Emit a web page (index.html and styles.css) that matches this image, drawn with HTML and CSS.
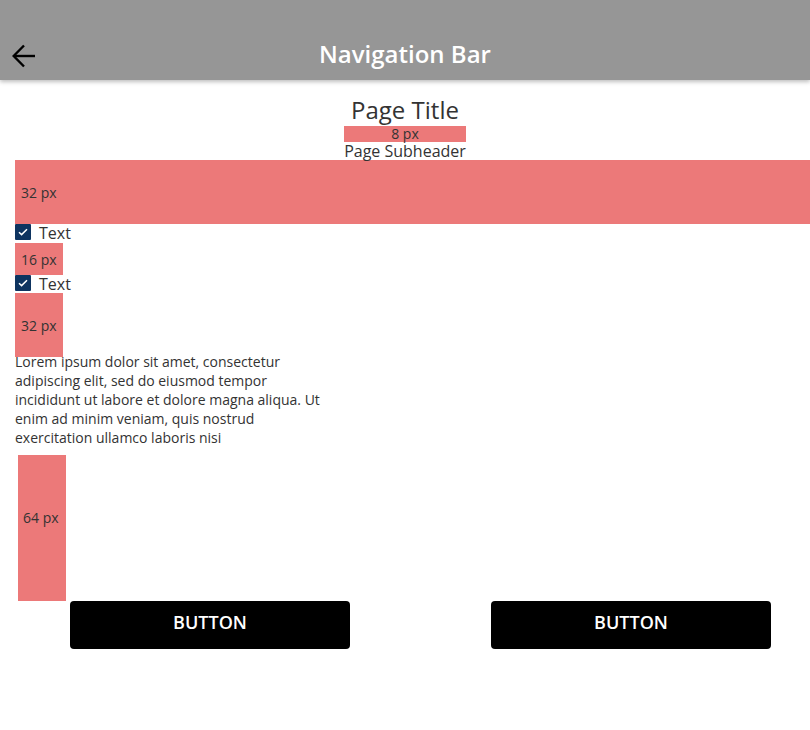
FILE: index.html
```html
<!DOCTYPE html>
<html lang="en">
<head>
<meta charset="utf-8">
<title>Navigation Bar</title>
<link rel="stylesheet" href="styles.css">
</head>
<body>
<header class="navbar">
  <button class="back" aria-label="Back">
    <svg width="26" height="26" viewBox="0 0 26 26" fill="none" stroke="#000" stroke-width="2.4" stroke-linejoin="miter">
      <path d="M3 13H24"/>
      <path d="M13 2.5L2.7 13L13 23.5"/>
    </svg>
  </button>
  <h1 class="nav-title">Navigation Bar</h1>
  <span class="nav-end"></span>
</header>
<main class="content">
  <section class="title-block">
    <h2 class="page-title">Page Title</h2>
    <div class="header-stack">
      <div class="spacer spacer-8">8 px</div>
      <p class="subheader">Page Subheader</p>
    </div>
  </section>
  <div class="spacer spacer-wide">32 px</div>
  <label class="check-row"><span class="checkbox"><svg width="16" height="16" viewBox="0 0 16 16"><path d="M4 8.2L6.6 10.6L12 5.2" fill="none" stroke="#fff" stroke-width="1.5"/></svg></span><span>Text</span></label>
  <div class="spacer spacer-16">16 px</div>
  <label class="check-row row-2"><span class="checkbox"><svg width="16" height="16" viewBox="0 0 16 16"><path d="M4 8.2L6.6 10.6L12 5.2" fill="none" stroke="#fff" stroke-width="1.5"/></svg></span><span>Text</span></label>
  <div class="spacer spacer-32">32 px</div>
  <p class="lorem">Lorem ipsum dolor sit amet, consectetur adipiscing elit, sed do eiusmod tempor incididunt ut labore et dolore magna aliqua. Ut enim ad minim veniam, quis nostrud exercitation ullamco laboris nisi</p>
  <div class="spacer spacer-64">64 px</div>
  <div class="buttons">
    <button class="btn">BUTTON</button>
    <button class="btn">BUTTON</button>
  </div>
</main>
</body>
</html>
```
FILE: styles.css
```css
* { box-sizing: border-box; }
html, body { margin: 0; padding: 0; background: #fff; }
body {
  font-family: "Open Sans", "Noto Sans", sans-serif;
  color: #333;
  width: 810px;
  overflow: hidden;
}
.navbar {
  height: 80px;
  background: #969696;
  box-shadow: 0 2px 4px rgba(0,0,0,0.25);
  display: grid;
  grid-template-columns: 1fr auto 1fr;
  align-items: start;
  padding: 38px 0 0 0;
}
.back {
  justify-self: start;
  margin: 5px 0 0 11px;
  padding: 0;
  border: 0;
  background: none;
  width: 26px;
  height: 26px;
  display: block;
}
.back svg { display: block; }
.nav-title {
  margin: 0;
  font-size: 24px;
  line-height: 32px;
  font-weight: 600;
  color: #fff;
}
.content {
  padding: 14px 0 0 15px;
}
.title-block {
  text-align: center;
  margin-left: -15px;
}
.page-title {
  margin: 0;
  font-size: 24px;
  font-weight: 400;
  line-height: 32px;
  color: #333;
}
.header-stack {
  display: inline-block;
  vertical-align: top;
}
.subheader {
  margin: 0;
  font-size: 16px;
  line-height: 18px;
}
.spacer {
  background: #ec7979;
  color: #333;
  font-size: 14px;
  display: flex;
  align-items: center;
  padding-left: 6px;
}
.spacer-8 {
  height: 16px;
  line-height: 16px;
  justify-content: center;
  padding-left: 0;
}
.spacer-wide { height: 64px; }
.spacer-16 { width: 48px; height: 32px; }
.spacer-32 { width: 48px; height: 64px; }
.spacer-64 { width: 48px; height: 146px; margin: 8px 0 0 3px; padding: 0 0 22px 5px; }
.check-row {
  display: flex;
  align-items: flex-start;
  gap: 8px;
  font-size: 16px;
  line-height: 19px;
  height: 19px;
}
.check-row.row-2 { height: 18px; line-height: 18px; }
.checkbox {
  width: 16px;
  height: 16px;
  background: #0e3460;
  border-radius: 1px;
  display: block;
}
.checkbox svg { display: block; }
.lorem {
  margin: -5px 0 0 0;
  width: 310px;
  font-size: 14px;
  line-height: 19px;
  color: #333;
}
.buttons {
  display: flex;
  gap: 141px;
  padding-left: 55px;
}
.btn {
  width: 280px;
  height: 48px;
  background: #000;
  color: #fff;
  border: 0;
  border-radius: 4px;
  font-family: "Open Sans", "Noto Sans", sans-serif;
  font-size: 18px;
  font-weight: 600;
  line-height: 42px;
  padding: 0 0 6px 0;
}
```
